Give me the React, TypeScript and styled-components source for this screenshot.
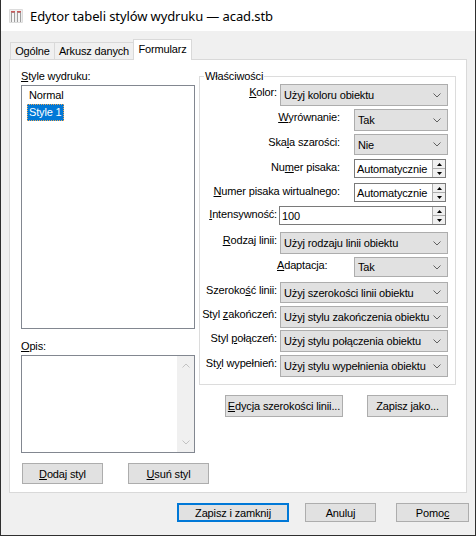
import React from "react";
import styled, { createGlobalStyle, css } from "styled-components";

const GlobalStyle = createGlobalStyle`
  html, body {
    margin: 0;
    padding: 0;
    background: #ffffff;
  }
  * {
    box-sizing: border-box;
  }
`;

const Window = styled.div`
  width: 476px;
  height: 536px;
  display: flex;
  flex-direction: column;
  border: 1px solid #2f2f2f;
  border-top: none;
  font-family: "Liberation Sans", Arial, sans-serif;
  font-size: 11px;
  letter-spacing: -0.15px;
  color: #000;
`;

const TitleBar = styled.div`
  height: 31px;
  flex-shrink: 0;
  display: flex;
  align-items: center;
  gap: 6px;
  padding: 0 0 0 7px;
  background: #ffffff;
`;

const TitleText = styled.span`
  font-family: "Noto Sans", "Segoe UI", sans-serif;
  font-size: 13px;
  letter-spacing: -0.1px;
  color: #000;
`;

const Body = styled.div`
  flex: 1;
  display: flex;
  flex-direction: column;
  background: #f0f0f0;
  padding: 8px 8px 0 8px;
`;

const TabStrip = styled.div`
  height: 20px;
  display: flex;
  align-items: flex-end;
  padding-left: 1px;
`;

const Tab = styled.div<{ $active?: boolean; $w: number }>`
  width: ${(p) => p.$w}px;
  height: 17px;
  display: flex;
  align-items: center;
  justify-content: center;
  border: 1px solid #d9d9d9;
  border-bottom: none;
  margin-right: -1px;
  background: #f0f0f0;
  ${(p) =>
    p.$active &&
    css`
      height: 21px;
      margin-bottom: -1px;
      padding-bottom: 2px;
      background: #ffffff;
      position: relative;
      z-index: 1;
    `}
`;

const Panel = styled.div`
  height: 434px;
  background: #ffffff;
  border: 1px solid #d9d9d9;
  padding: 10px 0 0 11px;
  display: grid;
  grid-template-columns: 174px 257px;
  grid-template-rows: 383px auto;
  column-gap: 4px;
  row-gap: 10px;
`;

const Column = styled.div`
  display: flex;
  flex-direction: column;
`;

const Caption = styled.div<{ $mt?: number }>`
  line-height: 13px;
  margin-top: ${(p) => p.$mt ?? 0}px;
`;

const ListBox = styled.div`
  height: 244px;
  margin-top: 2px;
  border: 1px solid #828790;
  padding: 1px 5px;
  display: flex;
  flex-direction: column;
  align-items: flex-start;
`;

const ListItem = styled.div<{ $selected?: boolean }>`
  height: 17px;
  line-height: 15px;
  padding: 0 1px;
  border: 1px solid transparent;
  ${(p) =>
    p.$selected &&
    css`
      background: #0078d7;
      color: #ffffff;
      border: 1px dotted #e8a85a;
    `}
`;

const TextArea = styled.div`
  height: 98px;
  margin-top: 2px;
  border: 1px solid #828790;
  display: flex;
  justify-content: flex-end;
`;

const ScrollTrack = styled.div`
  width: 17px;
  background: #f0f0f0;
  display: flex;
  flex-direction: column;
  justify-content: space-between;
  align-items: center;
  padding: 7px 0;
`;

const GroupBox = styled.fieldset`
  margin: 0;
  padding: 0 7px 7px 0;
  border: 1px solid #dcdcdc;
  min-width: 0;
`;

const Legend = styled.legend`
  margin-left: 4px;
  padding: 0 1px;
  line-height: 13px;
`;

const Rows = styled.div`
  display: flex;
  flex-direction: column;
  padding-top: 1px;
`;

const Row = styled.div<{ $h: number; $label: number; $gap: number }>`
  height: ${(p) => p.$h}px;
  display: grid;
  grid-template-columns: ${(p) => p.$label}px auto;
  column-gap: ${(p) => p.$gap}px;
  align-items: start;
`;

const Label = styled.div<{ $left?: boolean }>`
  margin-top: 2px;
  line-height: 13px;
  white-space: nowrap;
  text-align: ${(p) => (p.$left ? "left" : "right")};
  ${(p) =>
    p.$left &&
    css`
      padding-left: 77px;
    `}
`;

const ComboBox = styled.div<{ $w: number; $h?: number }>`
  width: ${(p) => p.$w}px;
  height: ${(p) => p.$h ?? 22}px;
  background: #e1e1e1;
  border: 1px solid #adadad;
  display: flex;
  align-items: center;
  justify-content: space-between;
  padding: 0 6px 0 3px;
`;

const SpinBox = styled.div<{ $w: number }>`
  width: ${(p) => p.$w}px;
  height: 19px;
  background: #ffffff;
  border: 1px solid #7a7a7a;
  display: flex;
  align-items: stretch;
`;

const SpinText = styled.div`
  flex: 1;
  display: flex;
  align-items: center;
  padding-left: 2px;
`;

const UpDown = styled.div`
  width: 13px;
  border-left: 1px solid #adadad;
  display: flex;
  flex-direction: column;
`;

const UpDownHalf = styled.div<{ $bottom?: boolean }>`
  flex: 1;
  display: flex;
  align-items: center;
  justify-content: center;
  background: #f0f0f0;
  ${(p) =>
    p.$bottom &&
    css`
      border-top: 1px solid #adadad;
    `}
`;

const Button = styled.button<{ $w: number; $h?: number; $default?: boolean }>`
  width: ${(p) => p.$w}px;
  height: ${(p) => p.$h ?? 22}px;
  padding: 0;
  background: #e1e1e1;
  border: 1px solid #adadad;
  font-family: inherit;
  font-size: 11px;
  letter-spacing: -0.15px;
  color: #000;
  ${(p) =>
    p.$default &&
    css`
      border: 2px solid #0078d7;
    `}
`;

const GroupButtons = styled.div`
  display: flex;
  justify-content: flex-end;
  gap: 24px;
  margin-top: 10px;
  padding-right: 8px;
`;

const LeftButtons = styled.div`
  grid-column: 1 / -1;
  display: flex;
  gap: 25px;
  padding-left: 1px;
`;

const Footer = styled.div`
  display: flex;
  justify-content: flex-end;
  margin: 10px -2px 0 0;
`;

const Chevron = ({ up, color = "#606060" }: { up?: boolean; color?: string }) => (
  <svg width="8" height="5" viewBox="0 0 8 5">
    <polyline
      points={up ? "0.5,4.5 4,1 7.5,4.5" : "0.5,0.5 4,4 7.5,0.5"}
      fill="none"
      stroke={color}
      strokeWidth="1"
    />
  </svg>
);

const Triangle = ({ up }: { up?: boolean }) => (
  <svg width="5" height="3" viewBox="0 0 5 3">
    <polygon points={up ? "2.5,0 5,3 0,3" : "0,0 5,0 2.5,3"} fill="#000" />
  </svg>
);

const AppIcon = () => (
  <svg width="16" height="16" viewBox="0 0 16 16">
    <rect x="1" y="1" width="14" height="14" rx="1" fill="#dcdcdc" />
    <rect x="2" y="2" width="12" height="12" fill="#efefef" />
    <rect x="3" y="4" width="4" height="10" fill="#9e9e9e" />
    <rect x="9" y="4" width="4" height="10" fill="#9e9e9e" />
    <rect x="4" y="5" width="2" height="9" fill="#f6f6f6" />
    <rect x="10" y="5" width="2" height="9" fill="#f6f6f6" />
    <rect x="3" y="3" width="4" height="1.5" fill="#c9595a" />
    <rect x="9" y="3" width="4" height="1.5" fill="#c9595a" />
  </svg>
);

const Combo = ({ w, h, value }: { w: number; h?: number; value: string }) => (
  <ComboBox $w={w} $h={h}>
    <span>{value}</span>
    <Chevron />
  </ComboBox>
);

const Spin = ({ w, value }: { w: number; value: string }) => (
  <SpinBox $w={w}>
    <SpinText>{value}</SpinText>
    <UpDown>
      <UpDownHalf>
        <Triangle up />
      </UpDownHalf>
      <UpDownHalf $bottom>
        <Triangle />
      </UpDownHalf>
    </UpDown>
  </SpinBox>
);

// wide rows: label ends at 276, control from 280; narrow: control from 354
const WIDE = { label: 77, gap: 3 };
const NARROW = { label: 140, gap: 14 };

export default function App() {
  return (
    <>
      <GlobalStyle />
      <Window>
        <TitleBar>
          <AppIcon />
          <TitleText>Edytor tabeli stylów wydruku — acad.stb</TitleText>
        </TitleBar>
        <Body>
          <TabStrip>
            <Tab $w={45}>Ogólne</Tab>
            <Tab $w={80}>Arkusz danych</Tab>
            <Tab $w={59} $active>
              Formularz
            </Tab>
          </TabStrip>
          <Panel>
            <Column>
              <Caption>
                <u>S</u>tyle wydruku:
              </Caption>
              <ListBox>
                <ListItem>Normal</ListItem>
                <ListItem $selected>Style 1</ListItem>
              </ListBox>
              <Caption $mt={11}>
                <u>O</u>pis:
              </Caption>
              <TextArea>
                <ScrollTrack>
                  <Chevron up color="#c2c2c2" />
                  <Chevron color="#c2c2c2" />
                </ScrollTrack>
              </TextArea>
            </Column>

            <Column>
              <GroupBox>
                <Legend>Właściwości</Legend>
                <Rows>
                  <Row $h={25} $label={WIDE.label} $gap={WIDE.gap}>
                    <Label>
                      <u>K</u>olor:
                    </Label>
                    <Combo w={168} value="Użyj koloru obiektu" />
                  </Row>
                  <Row $h={25} $label={NARROW.label} $gap={NARROW.gap}>
                    <Label>
                      <u>W</u>yrównanie:
                    </Label>
                    <Combo w={94} value="Tak" />
                  </Row>
                  <Row $h={25} $label={NARROW.label} $gap={NARROW.gap}>
                    <Label>
                      Ska<u>l</u>a szarości:
                    </Label>
                    <Combo w={94} h={21} value="Nie" />
                  </Row>
                  <Row $h={24} $label={NARROW.label} $gap={NARROW.gap}>
                    <Label>
                      Nu<u>m</u>er pisaka:
                    </Label>
                    <Spin w={92} value="Automatycznie" />
                  </Row>
                  <Row $h={23} $label={NARROW.label} $gap={NARROW.gap}>
                    <Label>
                      <u>N</u>umer pisaka wirtualnego:
                    </Label>
                    <Spin w={92} value="Automatycznie" />
                  </Row>
                  <Row $h={26} $label={WIDE.label} $gap={2}>
                    <Label>
                      <u>I</u>ntensywność:
                    </Label>
                    <Spin w={167} value="100" />
                  </Row>
                  <Row $h={25} $label={WIDE.label} $gap={WIDE.gap}>
                    <Label>
                      <u>R</u>odzaj linii:
                    </Label>
                    <Combo w={168} value="Użyj rodzaju linii obiektu" />
                  </Row>
                  <Row $h={25} $label={NARROW.label} $gap={NARROW.gap}>
                    <Label $left>
                      <u>A</u>daptacja:
                    </Label>
                    <Combo w={94} h={20} value="Tak" />
                  </Row>
                  <Row $h={24} $label={WIDE.label} $gap={WIDE.gap}>
                    <Label>
                      Szeroko<u>ś</u>ć linii:
                    </Label>
                    <Combo w={168} h={21} value="Użyj szerokości linii obiektu" />
                  </Row>
                  <Row $h={24} $label={WIDE.label} $gap={WIDE.gap}>
                    <Label>
                      Styl <u>z</u>akończeń:
                    </Label>
                    <Combo w={168} value="Użyj stylu zakończenia obiektu" />
                  </Row>
                  <Row $h={25} $label={WIDE.label} $gap={WIDE.gap}>
                    <Label>
                      Styl <u>p</u>ołączeń:
                    </Label>
                    <Combo w={168} value="Użyj stylu połączenia obiektu" />
                  </Row>
                  <Row $h={22} $label={WIDE.label} $gap={WIDE.gap}>
                    <Label>
                      St<u>y</u>l wypełnień:
                    </Label>
                    <Combo w={168} value="Użyj stylu wypełnienia obiektu" />
                  </Row>
                </Rows>
              </GroupBox>
              <GroupButtons>
                <Button $w={118}>
                  <u>E</u>dycja szerokości linii...
                </Button>
                <Button $w={81}>
                  Zapisz <u>j</u>ako...
                </Button>
              </GroupButtons>
            </Column>

            <LeftButtons>
              <Button $w={81} $h={21}>
                <u>D</u>odaj styl
              </Button>
              <Button $w={81} $h={21}>
                <u>U</u>suń styl
              </Button>
            </LeftButtons>
          </Panel>
          <Footer>
            <Button $w={112} $h={19} $default>
              Zapisz i zamknij
            </Button>
            <Button $w={71} $h={19} style={{ marginLeft: 16 }}>
              Anuluj
            </Button>
            <Button $w={73} $h={19} style={{ marginLeft: 20 }}>
              Pomo<u>c</u>
            </Button>
          </Footer>
        </Body>
      </Window>
    </>
  );
}
